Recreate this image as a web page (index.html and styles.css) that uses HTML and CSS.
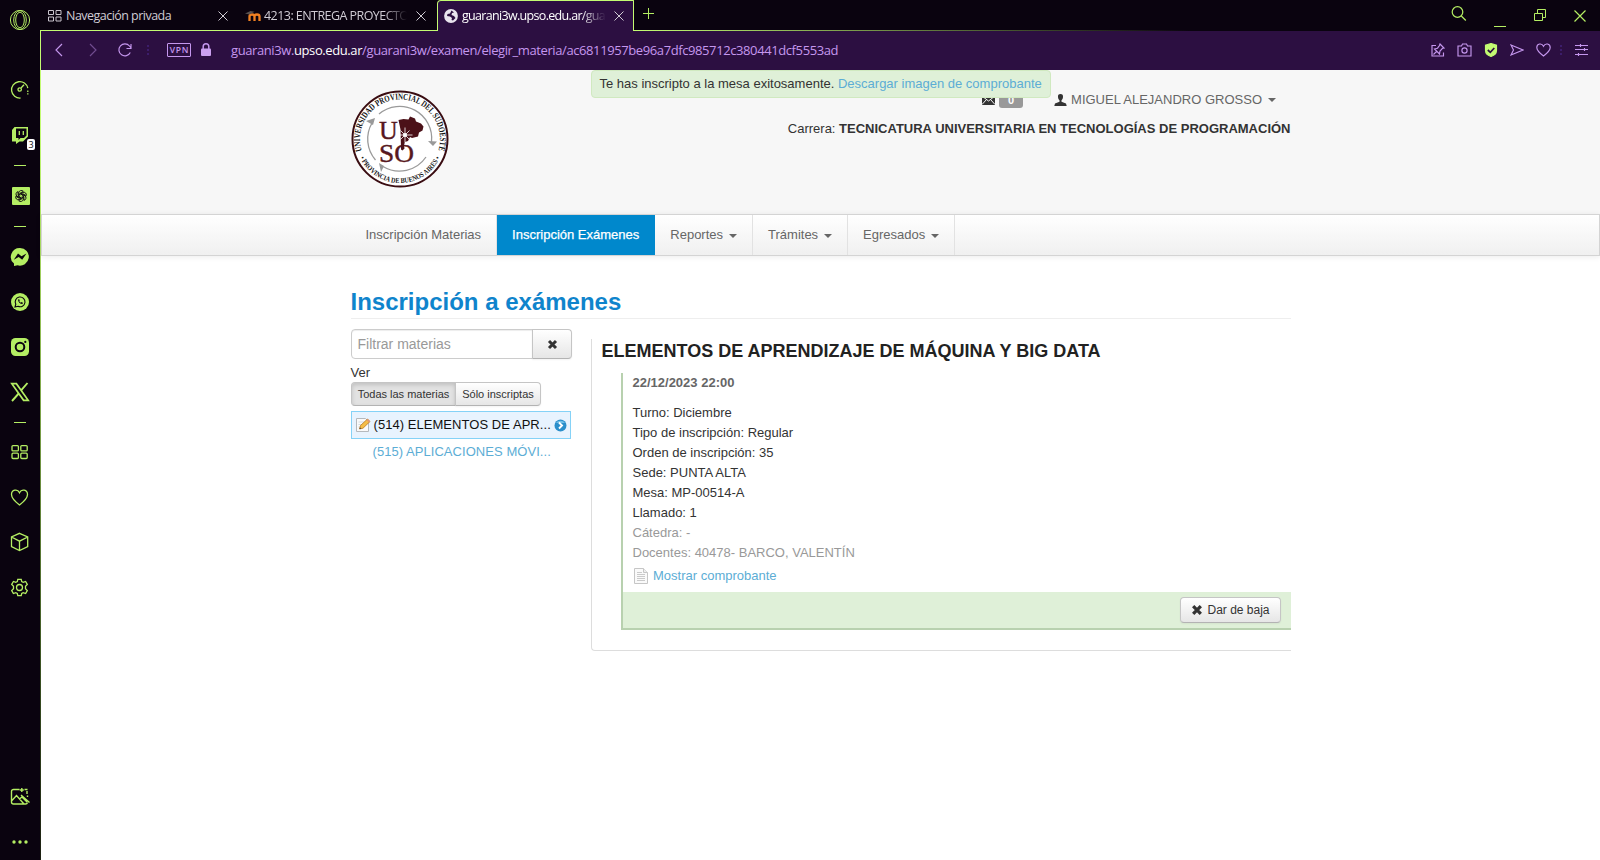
FILE: index.html
```html
<!DOCTYPE html>
<html lang="es">
<head>
<meta charset="utf-8">
<title>Inscripción a exámenes</title>
<link rel="stylesheet" href="styles.css">
</head>
<body>
<aside class="dock">
  <div class="dock-top"><svg width="22" height="22" viewBox="0 0 22 22" class="ln thin"><circle cx="11" cy="11" r="9.600"/><ellipse cx="11" cy="11" rx="4.300" ry="7.800"/><ellipse cx="11" cy="11" rx="6.300" ry="9.400"/></svg></div>
  <div class="dock-item"><svg width="20" height="20" viewBox="0 0 20 20" class="ln"><path d="M10.500 18A8.200 8.200 0 1 1 17.800 8.200"/><path d="M17.800 10.500v4" stroke-dasharray="1.500 1.200"/><circle cx="9.700" cy="9.500" r="1.700"/><path d="M11 8l3-3.300"/></svg></div>
  <div class="dock-item"><svg width="20" height="20" viewBox="0 0 20 20"><path fill="#b4ee63" fill-rule="evenodd" d="M4.500 2H18v9.500l-5 5H9.500L6 19v-2.500H2V5zM6 3.500v9.500h2.500v2l2-2H14l2.500-2.500v-7z"/><path class="ln" d="M9.300 6v4M13.300 6v4" stroke-width="1.600"/></svg><span class="dock-badge">3</span></div>
  <div class="dock-sep"><i></i></div>
  <div class="dock-item"><svg width="20" height="20" viewBox="0 0 20 20"><rect x="2" y="1" width="18" height="18" rx="1" fill="#b4ee63"/><g fill="none" stroke="#0a030f" stroke-width=".85" transform="translate(11 10)"><path id="petal" d="M-2.200 1.300V-3.400A2.600 2.600 0 0 1 2.300-4.700L-1-2.700V-.6"/><use href="#petal" transform="rotate(60)"/><use href="#petal" transform="rotate(120)"/><use href="#petal" transform="rotate(180)"/><use href="#petal" transform="rotate(240)"/><use href="#petal" transform="rotate(300)"/></g></svg></div>
  <div class="dock-sep"><i></i></div>
  <div class="dock-item"><svg width="20" height="20" viewBox="0 0 20 20"><path fill="#b4ee63" d="M10 1a9 8.800 0 1 1-2.500 17.300L4 19v-2.500A9 8.800 0 0 1 10 1z"/><path fill="#0a030f" d="M3.800 12.800L8 6.500l3.500 2.700 5-2.700-4.300 6.300-3.500-2.700z"/></svg></div>
  <div class="dock-item"><svg width="20" height="20" viewBox="0 0 20 20"><circle cx="10" cy="10" r="9" fill="#b4ee63"/><path d="M5 15l.8-2.800A4.900 4.900 0 1 1 8 14.300z" fill="none" stroke="#0a030f" stroke-width="1.100"/><path d="M8 7.500c0 2.500 2 4.500 4.500 4.500l.4-1.300-1.400-.7-.7.700c-.8-.4-1.200-.9-1.600-1.600l.6-.7-.6-1.200z" fill="#0a030f"/></svg></div>
  <div class="dock-item"><svg width="20" height="20" viewBox="0 0 20 20"><rect x="1" y="1" width="18" height="18" rx="4.500" fill="#b4ee63"/><circle cx="10" cy="10" r="4.300" fill="none" stroke="#0a030f" stroke-width="2"/><circle cx="15.300" cy="4.900" r="1.100" fill="#0a030f"/></svg></div>
  <div class="dock-item"><svg width="20" height="20" viewBox="0 0 20 20" class="ln"><path d="M1.800 1.700h4.600L18.200 18.300h-4.600z" stroke-width="1.700"/><path d="M17.500 1L11.300 8.200M8.700 11.500L2 19" stroke-width="1.900"/></svg></div>
  <div class="dock-sep short"><i></i></div>
  <div class="dock-item"><svg width="20" height="20" viewBox="0 0 20 20" class="ln"><rect x="2" y="3.600" width="6.400" height="5.300" rx="1"/><rect x="10.800" y="3.600" width="6.400" height="5.300" rx="1"/><rect x="2" y="11.200" width="6.400" height="5.300" rx="1"/><rect x="10.800" y="11.200" width="6.400" height="5.300" rx="1"/></svg></div>
  <div class="dock-item"><svg width="20" height="20" viewBox="0 0 20 20" class="ln"><path d="M9.500 18C5 14.500 1.500 11.500 1.500 7.500c0-4.800 6-6 8-1.800 2-4.200 8-3 8 1.800 0 4-3.500 7-8 10.500z"/></svg></div>
  <div class="dock-item"><svg width="20" height="20" viewBox="0 0 20 20" class="ln"><path d="M9.500 1.300L17.700 5v9.500l-8.200 4-8-4V5zM1.500 5l8 4.200L17.700 5M9.500 9.200v9.300"/></svg></div>
  <div class="dock-item"><svg width="20" height="20" viewBox="0 0 20 20" class="ln"><circle cx="9.500" cy="10.500" r="3"/><path d="M7.800 2.300h3.400l.5 2.300 1.500.8 2.400-.9 1.700 3-1.800 1.700v2.600l1.800 1.700-1.700 3-2.400-.8-1.500.8-.5 2.200H7.800l-.5-2.200-1.500-.8-2.400.8-1.700-3 1.800-1.700V9.200L1.700 7.500l1.700-3 2.400.9 1.500-.8z"/></svg></div>
  <div class="dock-item dock-end"><svg width="20" height="20" viewBox="0 0 20 20" class="ln"><path d="M9.500 2.500H3.500a2 2 0 0 0-2 2v10.500a2 2 0 0 0 2 2h12a2 2 0 0 0 2-1.500M14.500 2.500h3M17.500 10V8.500M1.500 14L6.500 8.500 14 17M9.500 12l2.500-2 5 5M11 8l8.500 7.500M11.800 1v4M9.800 3h4M17 4v3" stroke-width="1.400"/></svg></div>
  <div class="dock-item"><svg width="20" height="20" viewBox="0 0 20 20" fill="#b4ee63"><circle cx="4" cy="10" r="1.700"/><circle cx="10" cy="10" r="1.700"/><circle cx="16" cy="10" r="1.700"/></svg></div>
</aside>
<div class="edge"></div>
<div class="window">
  <header class="tabs">
    <div class="tab tab-a"><svg width="14" height="12" viewBox="0 0 14 12" fill="none" stroke="#c9c5cd"><path d="M.5.500h5v4h-5zM8 .500h5v4H8zM.5 7h5v4h-5zM8 7h5v4H8z"/></svg><span class="t1">Navegación privada</span><svg class="close" width="10" height="10" viewBox="0 0 10 10"><path d="M.5.500l9 9M9.500.500l-9 9"/></svg></div>
    <div class="tab tab-b"><svg width="16" height="12" viewBox="0 0 16 12"><path d="M4.500 11V6.500q0-2 2.500-2t2.500 2V11M9.500 6.500q0-2 2.500-2t2.500 2V11" fill="none" stroke="#f08022" stroke-width="2.300"/><path d="M0 3.500L5.500 1l4 .8-5 2.700z" fill="#57504f"/></svg><span class="t2">4213: ENTREGA PROYECTO</span><svg class="close" width="10" height="10" viewBox="0 0 10 10"><path d="M.5.500l9 9M9.500.500l-9 9"/></svg></div>
    <div class="tab tab-c"><svg width="14" height="14" viewBox="0 0 14 14"><circle cx="7" cy="7" r="6.900" fill="#e9e4ee"/><path d="M7.500 1.500L6 4.500 3.500 5 3 7l3 .5 2 1.500-.5 2 1.500.5L11.500 9 10 7 7.500 6 8 4l2-.5z" fill="#2c0f41"/></svg><span class="t3">guarani3w.upso.edu.ar/gua</span><svg class="close" width="10" height="10" viewBox="0 0 10 10"><path d="M.5.500l9 9M9.500.500l-9 9"/></svg></div>
    <svg class="plus ln" width="12" height="12" viewBox="0 0 12 12"><path d="M5.500 0v11M0 5.500h11" stroke-width="1"/></svg>
    <div class="win-buttons">
      <svg width="16" height="16" viewBox="0 0 16 16" class="ln"><circle cx="6.500" cy="6" r="5.300"/><path d="M10.300 10l4.500 4.500"/></svg>
      <svg width="12" height="16" viewBox="0 0 12 16" class="ln"><path d="M0 13.500h12" stroke-width="1"/></svg>
      <svg width="12" height="14" viewBox="0 0 12 14" class="ln"><path d="M.5 4.500h8v7h-8zM3.500 4V.500h8v8H9" stroke-width="1"/></svg>
      <svg width="12" height="12" viewBox="0 0 12 12" class="ln"><path d="M.5.500l11 11M11.500.500l-11 11"/></svg>
    </div>
  </header>
  <div class="bar">
    <svg class="back" width="8" height="14" viewBox="0 0 8 14"><path d="M7 1L1 7l6 6"/></svg>
    <svg class="fwd" width="8" height="14" viewBox="0 0 8 14"><path d="M1 1l6 6-6 6"/></svg>
    <svg class="reload" width="14" height="14" viewBox="0 0 14 14"><path d="M12.300 9.500A6 6 0 1 1 11.500 3L13 5M13 1v4.500H8.500"/></svg>
    <i class="dots"></i>
    <span class="vpn">VPN</span>
    <svg class="lock" width="10" height="14" viewBox="0 0 10 14"><rect class="lock-body" y="5.500" width="10" height="7.500" rx="1"/><path d="M2.200 6V3.600a2.800 2.800 0 0 1 5.600 0V6" stroke-width="1.500"/></svg>
    <span class="url">guarani3w.<b>upso.edu.ar</b>/guarani3w/examen/elegir_materia/ac6811957be96a7dfc985712c380441dcf5553ad</span>
    <div class="bar-icons">
      <svg width="14" height="14" viewBox="0 0 14 14"><path d="M5 2.500H1v10.500h11.500V9.500M9 1l4 4-1.500.3L9 8l-.5 3L3.500 6l3-.8L8.500 2.500zM5.800 8.200L2.500 11.500"/></svg>
      <svg width="15" height="14" viewBox="0 0 15 14"><path d="M1 3h3.500l1-2h4l1 2H14v10H1z"/><circle cx="7.500" cy="7.500" r="2.600"/></svg>
      <svg width="14" height="14" viewBox="0 0 14 14"><path class="shield" d="M7 .5l5.500 1.700v5.300c0 3-2.500 5-5.500 6-3-1-5.500-3-5.500-6V2.200z"/><path class="check" d="M3.800 7l2.500 2.300L10.300 5"/></svg>
      <svg width="14" height="14" viewBox="0 0 14 14"><path d="M1 2l12 5L1 12l2.500-5z"/></svg>
      <svg width="15" height="14" viewBox="0 0 15 14"><path d="M7.500 13C3.500 10 .8 7.500.8 4.500c0-4 5-4.800 6.700-1.300C9.200-.3 14.200.500 14.200 4.500c0 3-2.700 5.500-6.700 8.500z"/></svg>
      <i class="dots"></i>
      <svg width="13" height="12" viewBox="0 0 13 12"><path d="M0 1.500h13M0 5.500h13M0 10.500h13M5.500 0v3M9.500 4v3M3.500 9v3"/></svg>
    </div>
  </div>
  <main class="page">
    <div class="alert">Te has inscripto a la mesa exitosamente. <a>Descargar imagen de comprobante</a></div>
    <section class="head"><div class="container head-in">
      <svg class="logo" width="98" height="98" viewBox="0 0 98 98">
        <defs><path id="arcTop" d="M10.700 61A40 40 0 1 1 87.300 61"/><path id="arcBottom" d="M8.700 67A44.200 44.200 0 0 0 89.300 67"/></defs>
        <circle cx="49" cy="49" r="47.500" fill="#fff" stroke="#3a0d12" stroke-width="2"/>
        <g fill="none" stroke="#9a9a9a" stroke-width="1.300"><path d="M28 24A32 32 0 0 1 80.500 52M75 67A32 32 0 0 1 32 76.500M24.500 70A32 32 0 0 1 21 33"/></g>
        <path fill="#999" d="M77 51l9 .5-4 4.500zM28 73l5 3-3 6zM15 31l9-3-2 7z"/>
        <text class="logo-ring"><textPath href="#arcTop" textLength="148" lengthAdjust="spacingAndGlyphs">UNIVERSIDAD PROVINCIAL DEL SUDOESTE</textPath></text>
        <text class="logo-ring small"><textPath href="#arcBottom" startOffset="1" textLength="99" lengthAdjust="spacingAndGlyphs">• PROVINCIA DE BUENOS AIRES •</textPath></text>
        <text class="logo-letters" x="28" y="49">U</text><text class="logo-letters" x="28" y="71.500" textLength="35" lengthAdjust="spacingAndGlyphs">SO</text>
        <path fill="#4b1118" d="M47.500 30l5-1 5 .5 1.500-3 5 2 1 3 5 2 2.500 3-1 4-3.500 2-1 4-6 1.500-2-1-2 4-3 1-1 3 .5 3.500-2 2-1.500-1-.5-20z"/>
        <path stroke="#fff" stroke-width=".8" d="M54 37.500v15M46.500 45h15M49.500 40.500l9 9M58.500 40.500l-9 9"/><circle cx="54" cy="45" r="2" fill="#fff"/>
      </svg>
      <div class="user">
        <div class="user-row"><svg class="mail" width="13" height="10" viewBox="0 0 13 10"><path fill="#333" d="M0 0h13v10H0z"/><path d="M0 1l6.500 5L13 1M0 9.500l4.500-5M13 9.500l-4.500-5" fill="none" stroke="#f7f7f7"/></svg><span class="count">0</span><svg class="person" width="13" height="12" viewBox="0 0 13 12"><path fill="#333" d="M6.500 0C4.500 0 3.800 1.200 4 3c.1 1.800.8 2.700 1.500 3.300v1.500L1 9.500.3 12h12.400L12 9.500 7.500 7.800V6.300C8.200 5.700 8.900 4.800 9 3c.2-1.800-.5-3-2.500-3z"/></svg><span class="name">MIGUEL ALEJANDRO GROSSO</span><i class="caret"></i></div>
        <div class="career">Carrera: <b>TECNICATURA UNIVERSITARIA EN TECNOLOGÍAS DE PROGRAMACIÓN</b></div>
      </div>
    </div></section>
    <nav class="nav"><div class="container nav-in"><a>Inscripción Materias</a><a class="on">Inscripción Exámenes</a><a>Reportes<i class="caret"></i></a><a>Trámites<i class="caret"></i></a><a>Egresados<i class="caret"></i></a></div></nav>
    <section class="container content">
      <h2>Inscripción a exámenes</h2>
      <div class="cols">
        <div class="left">
          <div class="filter"><span class="input">Filtrar materias</span><span class="btn clear"><svg class="cross" width="11" height="11" viewBox="0 0 11 11"><path d="M2 2l7 7M9 2L2 9"/></svg></span></div>
          <div class="ver">Ver</div>
          <div class="group"><span class="btn pressed">Todas las materias</span><span class="btn">Sólo inscriptas</span></div>
          <div class="subject sel"><svg width="16" height="16" viewBox="0 0 16 16"><path d="M1.500 1.500h9l3 3v10h-12z" fill="#fafafa" stroke="#b5b9bd"/><path d="M3.500 5h6M3.500 7.500h5M3.500 10h3" stroke="#d3d8dd"/><path d="M4.500 12l1-3.500L12.500 2 15 4.500 8 11.200z" fill="#f5bd46" stroke="#b97822" stroke-width=".8"/><path d="M11.500 3L14 5.500 15.200 4.500 12.700 2z" fill="#e29477"/><path d="M4.500 12l.5-1.600 1.200 1.200z" fill="#333"/></svg><span>(514) ELEMENTOS DE APR...</span><svg class="go" width="13" height="13" viewBox="0 0 13 13"><circle cx="6.500" cy="6.500" r="6" fill="#2b8fcb"/><path d="M2 4a5 4 0 0 1 9 0z" fill="#70bfe7"/><path d="M5 3.500l3 3-3 3" fill="none" stroke="#fff" stroke-width="1.900"/></svg></div>
          <div class="subject"><span>(515) APLICACIONES MÓVI...</span></div>
        </div>
        <div class="right">
          <h3>ELEMENTOS DE APRENDIZAJE DE MÁQUINA Y BIG DATA</h3>
          <div class="exam">
            <div class="info"><div class="date">22/12/2023 22:00</div>
            <div>Turno: Diciembre</div><div>Tipo de inscripción: Regular</div><div>Orden de inscripción: 35</div><div>Sede: PUNTA ALTA</div><div>Mesa: MP-00514-A</div><div>Llamado: 1</div><div class="muted">Cátedra: -</div><div class="muted">Docentes: 40478- BARCO, VALENTÍN</div>
            <div class="receipt"><svg width="16" height="17" viewBox="0 0 16 17"><path d="M1.500.500h9l4 4v11h-13z" fill="#fafafa" stroke="#c6c6c6"/><path d="M10.500.500v4h4" fill="#eee" stroke="#c6c6c6"/><path d="M4 4.500h5M4 6.500h8M4 8.500h8M4 10.500h8M4 12.500h8" stroke="#c4c4c4" stroke-width=".9"/></svg><a>Mostrar comprobante</a></div></div>
            <div class="exam-foot"><span class="btn drop"><svg class="cross" width="12" height="12" viewBox="0 0 11 11"><path d="M2 2l7 7M9 2L2 9"/></svg>Dar de baja</span></div>
          </div>
        </div>
      </div>
    </section>
  </main>
</div>
</body>
</html>
```
FILE: styles.css
```css
* { box-sizing: border-box; }
body { margin: 0; height: 860px; overflow: hidden; display: flex; background: #fff; font: 13px/20px "Liberation Sans", Arial, sans-serif; color: #333; }
svg { display: block; flex: none; }
i { font-style: normal; }
.ln { fill: none; stroke: #b4ee63; stroke-width: 1.3; }
.ln.thin { stroke-width: 1; }

/* Side dock */
.dock { width: 40px; height: 860px; flex: none; background: #0a030f; display: flex; flex-direction: column; align-items: center; gap: 1px; }
.dock-top { height: 40px; flex: none; display: flex; align-items: center; margin-bottom: 27px; }
.dock-item { height: 44px; flex: none; display: flex; align-items: center; position: relative; }
.dock-sep { height: 15px; flex: none; display: flex; align-items: center; }
.dock-sep.short { height: 14px; }
.dock-sep i { width: 12px; height: 1px; background: #b4ee63; }
.dock-badge { position: absolute; left: 17px; top: 26px; width: 8px; height: 11px; border-radius: 2px; background: #fff; color: #111; font: 9px/11px "Open Sans", sans-serif; text-align: center; }
.dock-end { margin-top: auto; }
.dock-item:last-child { margin-bottom: -4px; }
.edge { width: 1px; flex: none; background: linear-gradient(#c3fb72 0, #c3fb72 100px, #3b5223 640px, #17170f 860px); margin-top: 30px; position: relative; z-index: 2; }

/* Tab strip */
.window { flex: 1; min-width: 0; display: flex; flex-direction: column; }
.tabs { height: 31px; flex: none; display: flex; align-items: center; background: linear-gradient(90deg, #c3fb72 0, #c3fb72 600px, #0a030f 1150px) 0 30px / 100% 1px no-repeat #0a030f; margin-left: -1px; padding-left: 1px; font: 12.5px/18px "Open Sans", "Noto Sans", sans-serif; color: #d0ccd4; }
.tab { display: flex; align-items: center; height: 31px; }
.tab span { white-space: nowrap; flex: none; }
.tab-a { width: 196px; padding-left: 7px; }
.t1 { margin-left: 4px; width: 147px; letter-spacing: -.53px; }
.tab-b { width: 200px; padding-left: 8px; }
.t2 { margin-left: 3px; width: 143px; letter-spacing: -.55px; -webkit-mask-image: linear-gradient(90deg, #000 84%, transparent); }
.tab-c { width: 197px; padding-left: 6px; border: 1px solid #c3fb72; border-bottom: 0; border-radius: 4px 1px 0 0; background: #2c0f41; color: #fff; }
.t3 { margin-left: 4px; width: 144px; letter-spacing: -.68px; -webkit-mask-image: linear-gradient(90deg, #000 82%, transparent); }
.close { fill: none; stroke: #d0ccd4; }
.tab-a .close { margin-left: 5px; }
.tab-b .close { margin-left: 9px; }
.tab-c .close { margin-left: 8px; }
.plus { margin: 0 0 3px 9px; }
.win-buttons { margin-left: auto; margin-right: 14px; display: flex; align-items: center; gap: 28px; }
.win-buttons svg { stroke-width: 1.2; }
.win-buttons svg:first-child { margin-top: -3px; margin-right: -1px; }
.win-buttons svg:nth-child(2) { margin-top: 10px; }

/* Address bar */
.bar { height: 39px; flex: none; background: #2c0f41; display: flex; align-items: center; padding: 0 0 1px 14px; color: #c597ee; }
.bar svg { fill: none; stroke: #c597ee; stroke-width: 1.15; }
.bar .fwd { margin-left: 26px; opacity: .45; }
.reload { margin-left: 21px; }
.dots { width: 2px; height: 10px; margin-left: 15px; background: repeating-linear-gradient(#3c1d6b 0 2px, transparent 2px 4px); }
.vpn { margin-left: 18px; width: 24px; height: 14px; border: 1px solid #c597ee; border-radius: 1px; font: 600 8.5px/12px "Open Sans", sans-serif; letter-spacing: .8px; text-align: center; padding-left: 1px; }
.lock { margin-left: 10px; }
.bar .lock-body { fill: #cba0ef; stroke: none; }
.bar .shield { fill: #c3fb72; stroke: #c3fb72; }
.bar .check { stroke: #2c0f41; stroke-width: 1.7; }
.url { margin-left: 20px; font: 13px/18px "Open Sans", "Noto Sans", sans-serif; letter-spacing: -.4px; white-space: nowrap; }
.url b { font-weight: 400; color: #fff; }
.bar-icons { margin-left: auto; margin-right: 12px; display: flex; align-items: center; gap: 12px; }
.bar-icons .dots { margin: 0 1px 0 -3px; }

/* Page */
.page { flex: 1; position: relative; background: #fff; }
.container { width: 940px; margin-left: 310px; }
a { color: #5cadd5; }
.alert { position: absolute; left: 550px; top: 0; z-index: 3; height: 28px; width: 460px; padding: 3px 7.5px; border: 1px solid #d0e9c0; border-radius: 4px; background: #dff0d8; white-space: nowrap; }
.head { height: 144px; background: #f7f7f7; }
.head-in { display: flex; justify-content: space-between; padding-top: 20px; }
.logo { margin-left: -.5px; margin-top: -.5px; }
.user { display: flex; flex-direction: column; align-items: flex-end; }
.user-row { display: flex; align-items: center; height: 20px; color: #666; margin-right: 15px; }
.count { margin: 0 31px 0 4px; width: 24px; height: 16px; border-radius: 3px; background: #999; color: #fff; font: bold 11px/16px "Liberation Sans", sans-serif; text-align: center; }
.person { margin-top: -1px; }
.name { margin-left: 4px; white-space: nowrap; }
.caret { display: inline-block; border: 4px solid transparent; border-top-color: currentColor; border-bottom: 0; margin-left: 6px; vertical-align: middle; }
.career { margin-top: 9px; white-space: nowrap; margin-right: .5px; }
.logo-ring { font: bold 9px "Liberation Serif", serif; fill: #151515; }
.logo-ring.small { font-size: 7.2px; }
.logo-letters { font: 26px "Liberation Serif", serif; fill: #571820; stroke: #571820; stroke-width: .4; }
.nav { height: 42px; border: 1px solid #d4d4d4; background: linear-gradient(#fff, #f0f0f0); box-shadow: 0 1px 6px rgba(0,0,0,.08); }
.nav-in { margin-left: 308.5px; display: flex; height: 40px; }
.nav a { color: #666; padding: 0 15px; line-height: 39px; border-right: 1px solid #e2e2e2; white-space: nowrap; }
.nav a.on { background: #0088cc; color: #fff; border-color: #0088cc; -webkit-text-stroke: .25px #fff; }
h2 { margin: 0 0 11px; padding-top: 26px; height: 63px; border-bottom: 1px solid #eee; color: #0f84cc; font-size: 24px; line-height: 40px; text-indent: -.5px; }
.cols { display: flex; }
.left { width: 221px; margin-right: 19px; }
.filter { display: flex; height: 30px; width: 221px; margin-top: -1px; }
.input { width: 182px; border: 1px solid #ccc; border-radius: 4px 0 0 4px; padding: 4px 5.5px; font-size: 14px; color: #999; box-shadow: inset 0 1px 1px rgba(0,0,0,.075); }
.btn { display: inline-flex; align-items: center; justify-content: center; border: 1px solid #c5c5c5; border-bottom-color: #b3b3b3; border-radius: 4px; background: linear-gradient(#fff, #e6e6e6); box-shadow: 0 1px 2px rgba(0,0,0,.05); white-space: nowrap; }
.clear { width: 40px; margin-left: -1px; border-radius: 0 4px 4px 0; }
.cross { fill: none; stroke: #333; stroke-width: 3; }
.ver { height: 20px; margin-top: 4px; text-indent: -.5px; }
.group { display: flex; height: 24px; font-size: 11px; margin-top: -1px; }
.group .btn { width: 86px; margin-left: -1px; border-radius: 0 4px 4px 0; }
.group .pressed { width: 105px; margin: 0; border-radius: 4px 0 0 4px; background: #e2e2e2; box-shadow: inset 0 2px 4px rgba(0,0,0,.15); }
.subject { height: 28px; width: 220px; display: flex; align-items: center; padding-left: 20.5px; border: 1px solid transparent; color: #5cadd5; white-space: nowrap; margin-top: -1px; letter-spacing: .05px; }
.subject.sel { margin-top: 5px; padding-left: 2.5px; border-color: #85d2f7; background: #e8f3fe; color: #111; }
.sel span { margin-left: 3px; }
.go { margin-left: auto; margin-right: 3.5px; }
.right { margin-top: 9px; flex: 1; height: 312px; border: 1px solid #ddd; border-width: 0 0 1px 1px; border-radius: 0 0 0 4px; padding-left: 10px; }
h3 { margin: 0; height: 34px; line-height: 25px; font-size: 18px; color: #222; white-space: nowrap; text-indent: -.5px; }
.exam { margin-left: 19px; border-left: 2px solid #b8d1af; border-bottom: 2px solid #b8d1af; height: 257px; display: flex; flex-direction: column; }
.info { flex: 1; padding-left: 9.5px; }
.date { font-weight: bold; color: #666; margin-bottom: 10px; line-height: 19px; height: 20px; }
.muted { color: #999; }
.receipt { display: flex; align-items: center; height: 26px; gap: 4px; margin-left: .5px; }
.exam-foot { height: 36px; background: #dff0d8; display: flex; justify-content: flex-end; padding: 5px 10px; }
.drop { width: 101px; height: 26px; font-size: 12px; gap: 4px; }
```
